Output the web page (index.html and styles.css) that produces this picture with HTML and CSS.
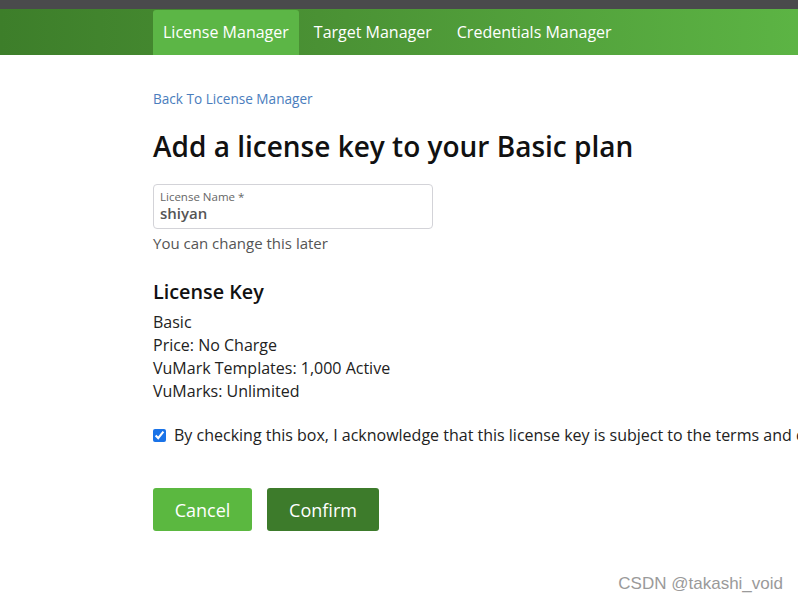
FILE: index.html
```html
<!DOCTYPE html>
<html lang="en">
<head>
  <meta charset="UTF-8" />
  <meta name="viewport" content="width=device-width, initial-scale=1.0" />
  <title>Add License Key</title>
  <link rel="stylesheet" href="styles.css">
</head>
<body>
  <div class="topbar"></div>
  <nav class="navbar">
    <a class="nav-item active" href="#">License Manager</a>
    <a class="nav-item" href="#">Target Manager</a>
    <a class="nav-item" href="#">Credentials Manager</a>
  </nav>

  <main class="content">
    <a class="back-link" href="#">Back To License Manager</a>
    <h1>Add a license key to your Basic plan</h1>

    <div class="field">
      <label class="field-label">License Name *</label>
      <div class="field-value">shiyan</div>
    </div>
    <div class="field-hint">You can change this later</div>

    <h2>License Key</h2>
    <ul class="key-info">
      <li>Basic</li>
      <li>Price: No Charge</li>
      <li>VuMark Templates: 1,000 Active</li>
      <li>VuMarks: Unlimited</li>
    </ul>

    <label class="agree">
      <input type="checkbox" checked>
      <span>By checking this box, I acknowledge that this license key is subject to the terms and conditions</span>
    </label>

    <div class="actions">
      <button class="btn btn-cancel">Cancel</button>
      <button class="btn btn-confirm">Confirm</button>
    </div>
  </main>

  <div class="watermark">CSDN @takashi_void</div>
</body>
</html>
```

FILE: styles.css
```css
* { margin: 0; padding: 0; box-sizing: border-box; }
html, body { height: 100%; overflow: hidden; }
body {
  font-family: "Open Sans", "Noto Sans", Arial, sans-serif;
  color: #222;
  background: #fff;
  position: relative;
}
.topbar {
  height: 9px;
  background: #4a4a4c;
}
/* Green navigation */
.navbar {
  height: 46px;
  display: flex;
  padding-left: 153px;
  background: linear-gradient(90deg, #3d7e2a 0%, #4a9134 40%, #5cb444 100%);
}
.nav-item {
  display: flex;
  align-items: center;
  padding: 0 10px 2px;
  margin-right: 5px;
  color: #fff;
  text-decoration: none;
  font-size: 16px;
  border-radius: 3px 3px 0 0;
  margin-top: 1px;
}
.nav-item.active {
  background: #5cb646;
}
/* Page body */
.content {
  padding: 34px 0 0 153px;
  overflow: hidden;
}
.back-link {
  display: block;
  color: #4a7dbd;
  font-size: 13.6px;
  text-decoration: none;
  line-height: 20px;
}
h1 {
  font-size: 28px;
  font-weight: 600;
  color: #111;
  margin-top: 19px;
  line-height: 36px;
}
.field {
  width: 280px;
  height: 45px;
  margin-top: 20px;
  border: 1px solid #d3d3d8;
  border-radius: 4px;
  padding: 5px 6px 0;
}
.field-label {
  display: block;
  font-size: 11.5px;
  color: #666;
  line-height: 14px;
}
.field-value {
  font-size: 15px;
  font-weight: 600;
  color: #555;
  line-height: 19px;
}
.field-hint {
  font-size: 15px;
  color: #555;
  line-height: 20px;
  margin-top: 4px;
}
h2 {
  font-size: 19.8px;
  font-weight: 600;
  color: #111;
  margin-top: 25px;
  line-height: 28px;
}
.key-info {
  list-style: none;
  font-size: 16px;
  line-height: 23px;
  margin-top: 5px;
  color: #222;
}
/* Terms checkbox */
.agree {
  display: flex;
  align-items: center;
  margin-top: 21px;
  font-size: 16px;
  line-height: 22px;
  white-space: nowrap;
}
.agree input {
  width: 13px;
  height: 13px;
  margin: 0 8px 0 0;
  flex-shrink: 0;
  accent-color: #1a73e8;
}
.actions {
  display: flex;
  gap: 15px;
  margin-top: 42px;
}
.btn {
  height: 43px;
  border: none;
  border-radius: 3px;
  color: #fff;
  font-family: inherit;
  font-size: 18px;
  cursor: pointer;
}
.btn-cancel {
  width: 99px;
  background: #5bb840;
}
.btn-confirm {
  width: 112px;
  background: #3d7b2b;
}
.watermark {
  position: absolute;
  right: 15px;
  bottom: 7px;
  font-family: "Liberation Sans", Arial, sans-serif;
  font-size: 17px;
  color: #9a9a9a;
}
```
